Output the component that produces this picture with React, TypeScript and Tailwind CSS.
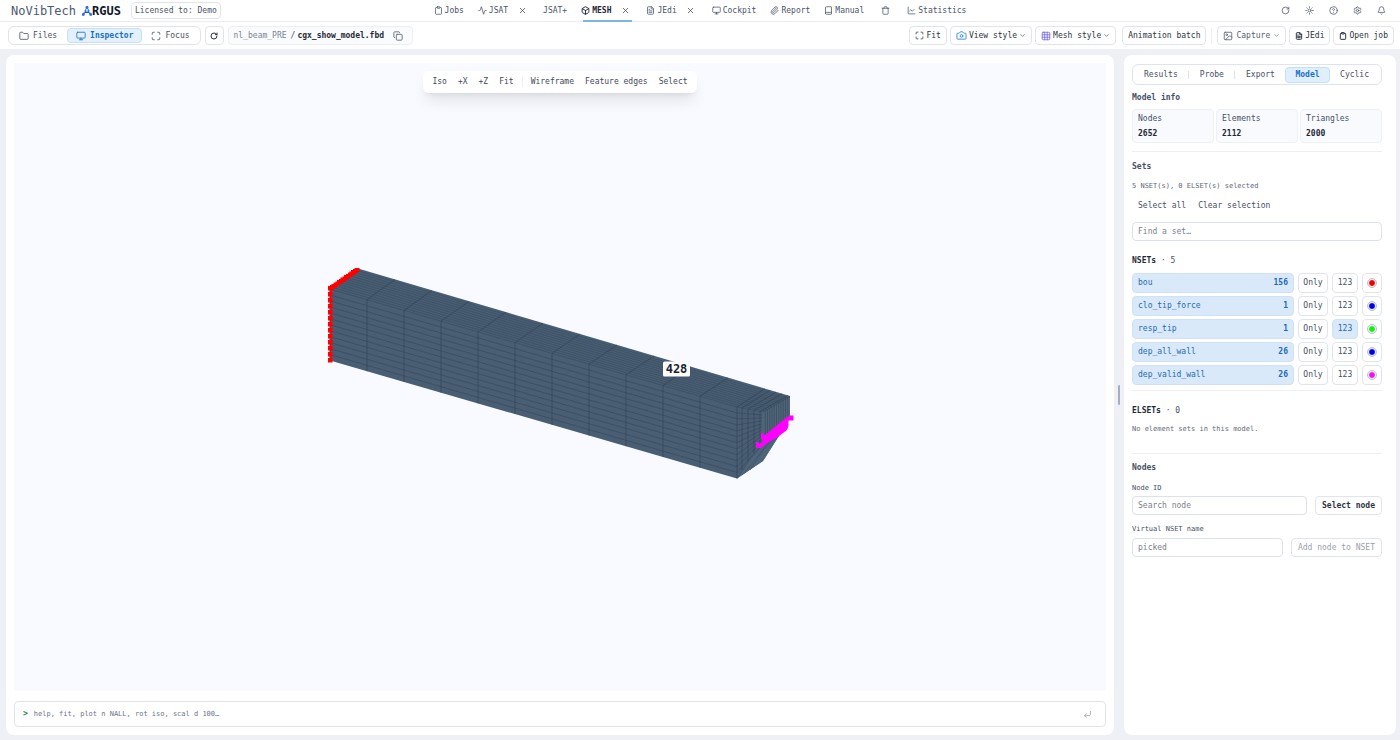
import type { ReactNode } from "react"
import {
  Activity,
  Bell,
  Book,
  Box,
  Camera,
  ChartLine,
  ChevronDown,
  CircleHelp,
  Clipboard,
  Copy,
  CornerDownLeft,
  FileText,
  Folder,
  Grid3x3,
  Image,
  Maximize,
  Monitor,
  Paperclip,
  RotateCw,
  Settings,
  Sun,
  Trash,
  X,
} from "lucide-react"

const nsets = [
  { name: "bou", count: 156, color: "#f00000", labels: false },
  { name: "clo_tip_force", count: 1, color: "#0000e6", labels: false },
  { name: "resp_tip", count: 1, color: "#12f012", labels: true },
  { name: "dep_all_wall", count: 26, color: "#0000e6", labels: false },
  { name: "dep_valid_wall", count: 26, color: "#f012f0", labels: false },
]

const stats = [
  { label: "Nodes", value: 2652 },
  { label: "Elements", value: 2112 },
  { label: "Triangles", value: 2000 },
]

const outline = "flex items-center rounded border border-[#e0e4ec] bg-white whitespace-nowrap"

function Logo() {
  return (
    <svg viewBox="0 0 20 20" className="size-[10px]" fill="none" stroke="#2f6fe4" strokeWidth="3" aria-hidden="true">
      <path d="M3 17 10 3l7 14" strokeDasharray="5 1.6" />
      <path d="M6 12.5h8" stroke="#1d4ed8" />
      <circle cx="10" cy="3" r="1.6" fill="#2f80f5" />
      <circle cx="2.6" cy="17" r="1.4" fill="#2f80f5" />
      <circle cx="17.4" cy="17" r="1.4" fill="#1d4ed8" />
    </svg>
  )
}

function Tab({ icon, label, active }: { icon?: ReactNode; label: string; active?: boolean }) {
  return (
    <a
      href="#"
      className={`flex h-full items-center gap-[2px] px-[7px] ${active ? "font-bold text-[#1f2937]" : "text-[#4a5468]"}`}
    >
      {icon}
      {label}
    </a>
  )
}

function ClosableTab({ icon, label, active }: { icon: ReactNode; label: string; active?: boolean }) {
  return (
    <div className="relative mr-[7px] flex h-full items-center">
      <Tab icon={icon} label={label} active={active} />
      <button aria-label={`Close ${label}`} className="flex w-[14px] justify-center text-[#3f4859]">
        <X size={9} />
      </button>
      {active && <span className="absolute right-0 -bottom-px left-[9px] h-[2px] bg-[#7fb4ea]" />}
    </div>
  )
}

function Header() {
  return (
    <header className="grid h-[22px] grid-cols-[1fr_auto_1fr] items-center border-b border-[#e9ebf2] bg-white">
      <div className="flex items-center pl-[11px]">
        <span className="text-[12px] text-[#4b5a70]">NoVibTech</span>
        <span className="ml-[6px] flex items-center text-[12px] font-bold text-[#101828]">
          <Logo />
          RGUS
        </span>
        <span className={`${outline} ml-[10px] h-[17px] px-[3px] text-[#4a5365]`}>Licensed to: Demo</span>
      </div>
      <nav className="flex h-full items-center">
        <Tab icon={<Clipboard size={9} />} label="Jobs" />
        <ClosableTab icon={<Activity size={9} />} label="JSAT" />
        <Tab label="JSAT+" />
        <ClosableTab icon={<Box size={9} strokeWidth={2.5} />} label="MESH" active />
        <ClosableTab icon={<FileText size={9} />} label="JEdi" />
        <Tab icon={<Monitor size={9} />} label="Cockpit" />
        <Tab icon={<Paperclip size={9} />} label="Report" />
        <Tab icon={<Book size={9} />} label="Manual" />
        <button aria-label="Trash" className="px-[10px] text-[#4a5468]">
          <Trash size={9} />
        </button>
        <Tab icon={<ChartLine size={9} />} label="Statistics" />
      </nav>
      <div className="flex items-center justify-end gap-[15px] pr-[14px] text-[#4a5365]">
        <button aria-label="Refresh"><RotateCw size={9} /></button>
        <button aria-label="Theme"><Sun size={9} /></button>
        <button aria-label="Help"><CircleHelp size={9} /></button>
        <button aria-label="Settings"><Settings size={9} /></button>
        <button aria-label="Notifications"><Bell size={9} /></button>
      </div>
    </header>
  )
}

function Toolbar() {
  return (
    <div className="flex h-[27px] items-center bg-white pl-2 pr-[6px]">
      <div className="flex h-[19px] items-center rounded-md border border-[#dfe3ec] text-[#4a5365]">
        <button className="flex items-center gap-1 px-[10px]">
          <Folder size={10} />
          Files
        </button>
        <button className="flex h-[15px] items-center gap-1 rounded-sm border border-[#c4dff8] bg-[#e4f1fd] px-2 font-bold text-[#1a6fc4]">
          <Monitor size={10} />
          Inspector
        </button>
        <button className="flex items-center gap-1 pl-[9px] pr-[10px]">
          <Maximize size={10} />
          Focus
        </button>
      </div>
      <button aria-label="Reload" className={`${outline} ml-1 h-[19px] w-[19px] justify-center text-[#2c3444]`}>
        <RotateCw size={8} strokeWidth={3} />
      </button>
      <div className="ml-1 flex h-[19px] items-center rounded border border-[#eceff5] bg-[#fafbfd] px-[5px]">
        <span className="w-[57px] text-[#7b8496]">nl_beam_PRE</span>
        <span className="text-[#4a5365]">/</span>
        <span className="ml-[2px] font-bold text-[#1f2937]">cgx_show_model.fbd</span>
        <button aria-label="Copy path" className="ml-[9px] mr-1 text-[#566074]">
          <Copy size={10} />
        </button>
      </div>

      <div className="ml-auto flex items-center gap-[3px] text-[#2c3444]">
        <button className={`${outline} h-[19px] gap-[2px] px-[5px]`}>
          <Maximize size={9} />
          Fit
        </button>
        <button className={`${outline} h-[19px] gap-[2px] px-[5px]`}>
          <Camera size={11} className="text-[#2f86e0]" />
          View style
          <ChevronDown size={7} />
        </button>
        <button className={`${outline} h-[19px] gap-[2px] px-[5px]`}>
          <Grid3x3 size={10} className="text-[#7468ea]" />
          Mesh style
          <ChevronDown size={7} />
        </button>
        <button className={`${outline} ml-[3px] h-[19px] px-[5px]`}>Animation batch</button>
        <span className="mx-[2px] h-4 w-px bg-[#eceff5]" />
        <button className={`${outline} h-[19px] gap-[3px] px-[5px] text-[#566074]`}>
          <Image size={10} />
          Capture
          <ChevronDown size={7} />
        </button>
        <button className={`${outline} h-[19px] gap-[2px] px-[5px]`}>
          <FileText size={8} strokeWidth={3} />
          JEdi
        </button>
        <button className={`${outline} h-[19px] gap-[2px] px-[5px]`}>
          <Clipboard size={8} strokeWidth={3} />
          Open job
        </button>
      </div>
    </div>
  )
}

// Beam corners in viewport units. The side face is 11 x 12 elements,
// the cap on the right is refined and tapers towards the bottom.
const sideTop = (x: number) => 289 + ((x - 330) * 118) / 407
const backTop = (x: number) => 268.5 + ((x - 358) * 127.5) / 432
const columns = Array.from({ length: 12 }, (_, i) => 330 + i * 37)
const rows = Array.from({ length: 11 }, (_, i) => ((i + 1) * 71.5) / 12)
const depth = Array.from({ length: 11 }, (_, i) => (i + 1) / 12)
const capSteps = [5, 11, 17, 23]

function Mesh() {
  return (
    <svg viewBox="14 63 1092 628" className="h-full w-full" role="img" aria-label="Beam mesh">
      <path d="M330 289 358 268.500 790 396V418L782 431 763 461 737 478.500 330 360.500Z" fill="#495d73" />
      <path d="M763 412 790 396.500V418L758 446Z" fill="#506579" />
      <path d="M737 478.500 763 461 782 431 758 446 748 463Z" fill="#4e647a" />
      <g stroke="#2f3f50" strokeWidth="0.6" fill="none">
        {columns.map((x) => (
          <path key={x} d={`M${x + 28} ${backTop(x + 28)}L${x} ${sideTop(x)}V${sideTop(x) + 71.5}`} />
        ))}
        {rows.map((dy) => (
          <path key={dy} d={`M330 ${289 + dy}L737 ${407 + dy}`} strokeOpacity="0.75" />
        ))}
        {depth.map((t) => (
          <path
            key={t}
            d={`M${330 + 28 * t} ${289 - 20.5 * t}L${737 + 28 * t} ${407 - 18 * t}L${763 + 27 * t} ${412 - 15.5 * t}`}
            strokeOpacity="0.55"
          />
        ))}
        <path d="M330 289 737 407 763 412 790 396.500" strokeOpacity="0.6" />
        {capSteps.map((dx) => (
          <path
            key={dx}
            d={`M${765 + dx} ${389 + dx * 0.28}L${737 + dx} ${407 + dx * 0.2}V${477 - dx * 1.4}`}
          />
        ))}
        {rows.map((dy) => (
          <path key={dy} d={`M737 ${407 + dy}L762 ${412 + dy * 0.5}`} strokeOpacity="0.75" />
        ))}
        {depth.map((t) => (
          <path key={t} d={`M${763 + 27 * t} ${412 - 15.5 * t}V${438 - 20 * t}`} strokeOpacity="0.8" />
        ))}
        <path d="M737 478.500 749 461 768 438M742 475 755 460 775 434M750 470 763 450 782 430" strokeOpacity="0.5" />
      </g>
      <g fill="#ff0000">
        {Array.from({ length: 13 }, (_, i) => (
          <rect key={i} x="328" y={286 + i * 6} width="4.500" height="4.500" />
        ))}
        <path d="M328 286h2v-1h1.500v-1h2v-1.500h2v-1h1.500v-1.500h2v-1h1.500v-1.500h2v-1h1.500v-1.500h2v-1h2v-1.500h1.500v-1h1.500v-1.500h2v-1h1.500v-1h5v4h-1.500v1h-2v1.500h-1.500v1h-2v1.500h-2v1h-1.500v1.500h-2v1h-1.500v1.500h-2v1h-2v1.500h-1.500v1h-2v1.500h-1.500v1h-2v1.500h-1.500v1h-3Z" />
        <path d="M330.500 288V362" stroke="#ff0000" strokeWidth="1.500" />
      </g>
      <path
        d="M756 442H758.500L759.500 444 763.500 441 761 439V433H763L764.500 435.500 789 415.500H793.500V420.500H788.500V426L787 430 777 437.500 769 442 760.500 448H756Z"
        fill="#ff00ff"
      />
      <rect x="663" y="361.500" width="27" height="15" rx="1.500" fill="#fdfdfd" />
      <text x="676.500" y="373" textAnchor="middle" className="text-[12px] font-bold" fill="#1b2430">
        428
      </text>
    </svg>
  )
}

function Viewport() {
  return (
    <main className="flex min-w-0 flex-1 flex-col rounded-lg bg-white p-2">
      <div className="relative min-h-0 flex-1 bg-[#f8faff]">
        <Mesh />
        <div className="absolute inset-x-0 top-2 flex justify-center">
          <div className="flex h-[22px] items-center gap-[11px] rounded-md bg-white px-[9px] text-[#3f4859] shadow-lg">
            <button>Iso</button>
            <button>+X</button>
            <button>+Z</button>
            <button>Fit</button>
            <span className="-mx-[3px] h-[10px] w-px bg-[#eceff5]" />
            <button>Wireframe</button>
            <button>Feature edges</button>
            <button>Select</button>
          </div>
        </div>
      </div>
      <label className="mt-[10px] flex h-[26px] items-center gap-[6px] rounded border border-[#e0e3ea] pl-2 pr-[13px]">
        <span className="font-bold text-[#15803d]">&gt;</span>
        <input
          aria-label="Command"
          placeholder="help, fit, plot n NALL, rot iso, scal d 100…"
          className="min-w-0 flex-1 text-[7px] outline-none placeholder:text-[#6b7486]"
        />
        <CornerDownLeft size={9} className="text-[#9aa1ae]" />
      </label>
    </main>
  )
}

function Inspector() {
  const field = "h-[19px] min-w-0 flex-1 rounded border border-[#dde1e9] px-[5px] outline-none placeholder:text-[#7b7f88]"
  return (
    <aside className="flex w-[272px] shrink-0 flex-col rounded-lg bg-white pb-2 pl-2 pr-[14px] pt-[9px] text-[#465064]">
      <div className="flex h-[21px] items-center justify-between rounded-md border border-[#dfe3ec] pl-[11px] pr-3">
        <button>Results</button>
        <span className="h-2 w-px bg-[#dfe3ec]" />
        <button>Probe</button>
        <span className="h-2 w-px bg-[#dfe3ec]" />
        <button>Export</button>
        <button className="flex h-4 items-center rounded-sm border border-[#c4dff8] bg-[#e0effd] px-[9px] font-bold text-[#1a6fc4]">
          Model
        </button>
        <button>Cyclic</button>
      </div>

      <h2 className="mt-2 font-bold leading-[10px]">Model info</h2>
      <dl className="mt-[6px] grid grid-cols-3 gap-[2px]">
        {stats.map((stat) => (
          <div key={stat.label} className="h-[34px] rounded-sm border border-[#edf0f6] bg-[#f9fafe] px-[5px] pt-[3px]">
            <dt className="leading-[12px]">{stat.label}</dt>
            <dd className="mt-[3px] font-bold leading-[12px] text-[#1f2937]">{stat.value}</dd>
          </div>
        ))}
      </dl>

      <section className="mt-2 border-t border-[#eceff4] pt-[10px]">
        <h2 className="font-bold leading-[10px]">Sets</h2>
        <p className="mt-[9px] text-[7px] leading-[10px] text-[#5f687a]">5 NSET(s), 0 ELSET(s) selected</p>
        <div className="mt-[10px] flex gap-3 px-[6px] leading-[10px]">
          <button>Select all</button>
          <button>Clear selection</button>
        </div>
        <div className="mt-[11px] flex">
          <input aria-label="Find a set" placeholder="Find a set…" className={field} />
        </div>
      </section>

      <section className="mt-[15px]">
        <h3 className="leading-[10px]">
          <span className="font-bold text-[#1f2937]">NSETs</span> · 5
        </h3>
        <ul className="mt-[7px] flex flex-col gap-[3px]">
          {nsets.map((set) => (
            <li key={set.name} className="flex h-5 gap-1">
              <button className="flex flex-1 items-center justify-between rounded border border-[#cfe2f5] bg-[#d9e9f9] px-[5px] text-[#1f6ab2]">
                <span>{set.name}</span>
                <span className="font-bold">{set.count}</span>
              </button>
              <button className={`${outline} w-[30px] justify-center`}>Only</button>
              <button
                className={
                  set.labels
                    ? "flex w-[26px] items-center justify-center rounded border border-[#cfe2f5] bg-[#d9e9f9] text-[#1f6ab2]"
                    : `${outline} w-[26px] justify-center`
                }
              >
                123
              </button>
              <button aria-label={`Colour of ${set.name}`} className={`${outline} w-5 justify-center`}>
                <span
                  className="size-2 rounded-full border border-white outline outline-[#b9bfd0]"
                  style={{ backgroundColor: set.color }}
                />
              </button>
            </li>
          ))}
        </ul>
      </section>

      <section className="mt-[5px] border-t border-[#eceff4] pt-[15px]">
        <h3 className="leading-[10px]">
          <span className="font-bold text-[#1f2937]">ELSETs</span> · 0
        </h3>
        <p className="mt-2 text-[7px] leading-[10px] text-[#5f687a]">No element sets in this model.</p>
      </section>

      <section className="mt-[19px] border-t border-[#eceff4] pt-[9px]">
        <h2 className="font-bold leading-[10px]">Nodes</h2>
        <label htmlFor="node-id" className="mt-[10px] block text-[7px] leading-[10px]">
          Node ID
        </label>
        <div className="mt-[3px] flex gap-2">
          <input id="node-id" placeholder="Search node" className={field} />
          <button className={`${outline} px-[6px] font-bold text-[#2c3444]`}>Select node</button>
        </div>
        <label htmlFor="nset-name" className="mt-[9px] block text-[7px] leading-[10px]">
          Virtual NSET name
        </label>
        <div className="mt-1 flex gap-2">
          <input id="nset-name" placeholder="picked" className={field} />
          <button disabled className={`${outline} px-[6px] text-[#9aa1ae]`}>
            Add node to NSET
          </button>
        </div>
      </section>
    </aside>
  )
}

export default function App() {
  return (
    <div className="flex h-screen flex-col bg-[#eef0f6] font-['DejaVu_Sans_Mono',monospace] text-[8px]">
      <Header />
      <Toolbar />
      <div className="flex min-h-0 flex-1 pb-[5px] pl-[6px] pr-1 pt-[6px]">
        <Viewport />
        <div className="flex w-[10px] items-center justify-center">
          <span className="h-5 w-[2px] rounded-full bg-[#a4aec6]" />
        </div>
        <Inspector />
      </div>
    </div>
  )
}
